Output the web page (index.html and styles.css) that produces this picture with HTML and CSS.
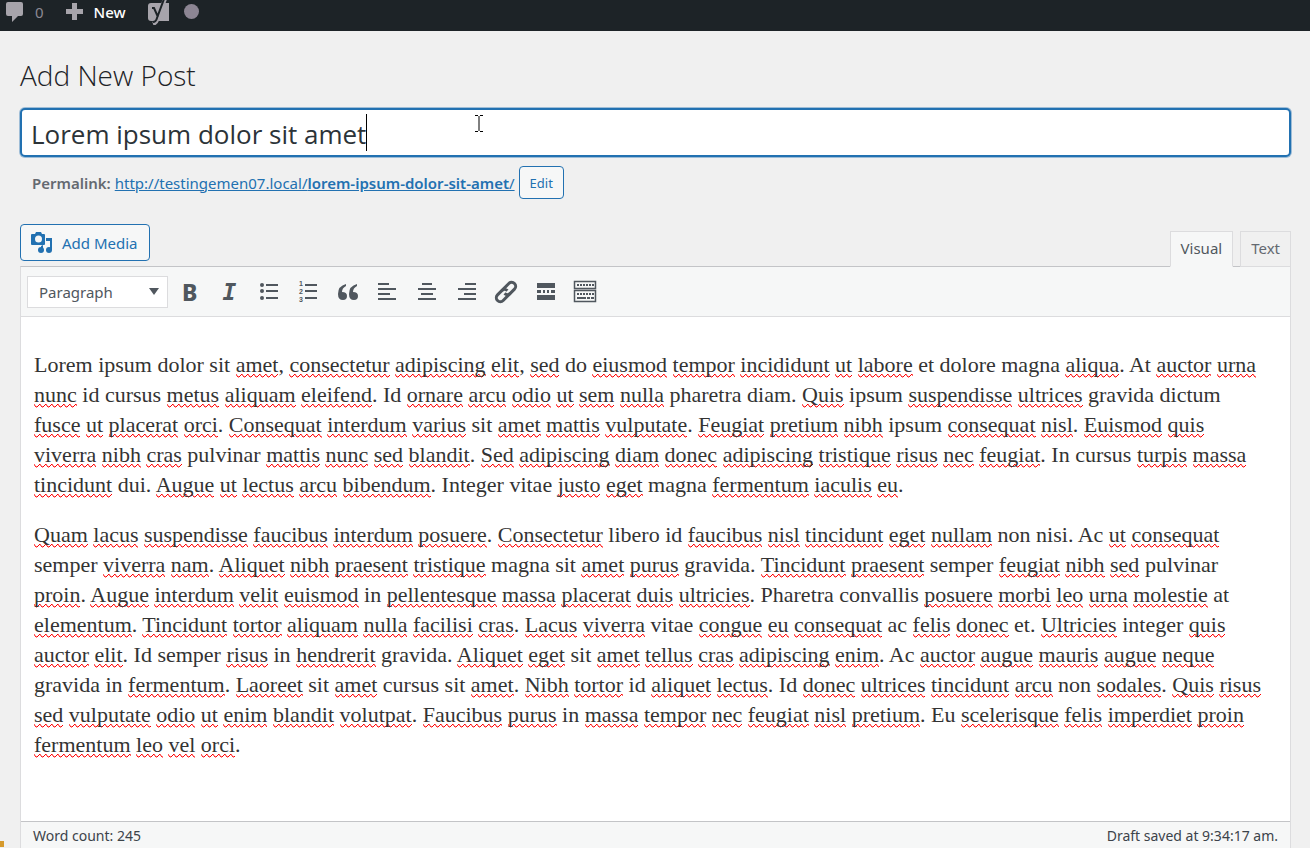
FILE: index.html
```
<!DOCTYPE html>
<html lang="en">
<head>
  <meta charset="utf-8">
  <title>Add New Post</title>
  <link rel="stylesheet" href="styles.css">
</head>
<body>
  <nav class="adminbar">
    <a href="#" class="bar-item">
      <svg width="18" height="22" viewBox="0 0 18 22"><path d="M2 1h13a2 2 0 0 1 2 2v10a2 2 0 0 1-2 2h-3l-6 6v-6H2a2 2 0 0 1-2-2V3a2 2 0 0 1 2-2z"/></svg>
      <span class="count">0</span>
    </a>
    <a href="#" class="bar-item bar-new">
      <svg width="17" height="22" viewBox="0 0 17 22"><path d="M6 2h5v6h6v5h-6v6H6v-6H0V8h6z"/></svg>
      <span>New</span>
    </a>
    <a href="#" class="bar-seo" aria-label="SEO">
      <svg width="22" height="26" viewBox="0 0 22 26">
        <path d="M3 4h18v18H3a3 3 0 0 1-3-3V7a3 3 0 0 1 3-3z"/>
        <path d="M17 0l-8 21q-1 3-4 4" fill="none" stroke="#a7a4ab" stroke-width="4"/>
        <path d="M16 0L9 19q-1 4-4 4M4 9h2l4 9" fill="none" stroke="#1d2327" stroke-width="2"/>
      </svg>
      <span class="score"></span>
    </a>
  </nav>

  <main class="wrap">
    <h1>Add New Post</h1>

    <div class="title-wrap">
      <input type="text" class="title" aria-label="Title" value="Lorem ipsum dolor sit amet">
      <span class="caret"></span>
      <svg class="pointer" width="8" height="17" viewBox="0 0 8 17"><path d="M0 .5h3M5 .5h3M0 16.5h3M5 16.5h3M4 1v15" fill="none" stroke="#000"/></svg>
    </div>

    <div class="permalink">
      <strong>Permalink:</strong>
      <a href="#">http://testingemen07.local/<b>lorem-ipsum-dolor-sit-amet</b>/</a>
      <button class="btn btn-small">Edit</button>
    </div>

    <div class="editor-tools">
      <button class="btn btn-media">
        <svg width="22" height="22" viewBox="0 0 22 22">
          <path fill-rule="evenodd" d="M1 2h3l1-2h5l1 2h2q1 0 1 1v9q0 1-1 1H1q-1 0-1-1V3q0-1 1-1zM7.500 3.500a3.500 3.500 0 1 0 0 7a3.500 3.500 0 1 0 0-7z"/>
          <path d="M15 6h6v12h-2V9h-4z"/>
          <path d="M12 13v5h-2v-4z"/>
          <circle cx="10" cy="18" r="3"/>
          <circle cx="18" cy="18" r="3"/>
        </svg>
        Add Media
      </button>
      <div class="tabs">
        <button class="tab active">Visual</button>
        <button class="tab">Text</button>
      </div>
    </div>

    <div class="editor">
      <div class="toolbar">
        <select class="format" aria-label="Format">
          <option>Paragraph</option>
        </select>
        <div class="tools">
          <button class="tool bold" aria-label="Bold">B</button>
          <button class="tool italic" aria-label="Italic">I</button>
          <button class="tool" aria-label="Bulleted list">
            <svg viewBox="0 0 24 24"><circle cx="5" cy="5" r="2"/><circle cx="5" cy="11" r="2"/><circle cx="5" cy="18" r="2"/><path d="M9 4h12v2H9zM9 10h12v2H9zM9 17h12v2H9z"/></svg>
          </button>
          <button class="tool" aria-label="Numbered list">
            <svg viewBox="0 0 24 24"><text x="3" y="6">1</text><text x="3" y="14">2</text><text x="3" y="22">3</text><path d="M9 4h12v2H9zM9 10h12v2H9zM9 17h12v2H9z"/></svg>
          </button>
          <button class="tool" aria-label="Blockquote">
            <svg viewBox="0 0 24 24"><path d="M10 4Q2 6 2 14q0 6 5 6 4 0 4-4t-5-4q0-4 4-6z"/><path d="M21 4q-8 2-8 10 0 6 5 6 4 0 4-4t-5-4q0-4 4-6z"/></svg>
          </button>
          <button class="tool" aria-label="Align left">
            <svg viewBox="0 0 24 24"><path d="M3 3h11v2H3zM3 8h18v2H3zM3 13h12v2H3zM3 18h18v2H3z"/></svg>
          </button>
          <button class="tool" aria-label="Align center">
            <svg viewBox="0 0 24 24"><path d="M7 3h10v2H7zM3 8h18v2H3zM6 13h12v2H6zM3 18h18v2H3z"/></svg>
          </button>
          <button class="tool" aria-label="Align right">
            <svg viewBox="0 0 24 24"><path d="M10 3h11v2H10zM3 8h18v2H3zM9 13h12v2H9zM3 18h18v2H3z"/></svg>
          </button>
          <button class="tool" aria-label="Insert link">
            <svg viewBox="0 0 24 24"><g fill="none" stroke="currentColor" stroke-width="3" transform="rotate(-45 12 12)"><path d="M14 16H4a4 4 0 0 1 0-8h6a4 4 0 0 1 4 4"/><path d="M10 8h10a4 4 0 0 1 0 8h-6a4 4 0 0 1-4-4"/></g></svg>
          </button>
          <button class="tool" aria-label="Read more">
            <svg viewBox="0 0 24 24"><path d="M3 3h18v5H3zM3 15h18v5H3zM3 10h4v3H3zM9 10h2v3H9zM13 10h2v3h-2zM17 10h4v3h-4z"/></svg>
          </button>
          <button class="tool" aria-label="Toggle toolbar">
            <svg viewBox="0 0 24 24"><path d="M1.500 1.500h21v7h-21zM1.500 10.500h21v11h-21z" fill="none" stroke="currentColor" stroke-width="1.500"/><path d="M4 5h17M4 14h17" fill="none" stroke="currentColor" stroke-width="2" stroke-dasharray="2 1"/><path d="M4 17h9v2H4zM14 17h3v2h-3zM18 17h3v2h-3z"/></svg>
          </button>
        </div>
      </div>

      <div class="post-body" contenteditable="true" spellcheck="false" role="textbox" aria-label="Post content">
        <p>
          Lorem ipsum dolor sit <u>amet</u>, <u>consectetur</u> <u>adipiscing</u> <u>elit</u>, <u>sed</u> do <u>eiusmod</u> <u>tempor</u> <u>incididunt</u> <u>ut</u> <u>labore</u> et dolore magna <u>aliqua</u>. At <u>auctor</u> <u>urna</u><br>
          <u>nunc</u> id cursus <u>metus</u> <u>aliquam</u> <u>eleifend</u>. Id <u>ornare</u> <u>arcu</u> <u>odio</u> <u>ut</u> <u>sem</u> <u>nulla</u> pharetra diam. <u>Quis</u> ipsum <u>suspendisse</u> <u>ultrices</u> gravida dictum<br>
          <u>fusce</u> <u>ut</u> <u>placerat</u> <u>orci</u>. <u>Consequat</u> <u>interdum</u> <u>varius</u> sit <u>amet</u> <u>mattis</u> <u>vulputate</u>. <u>Feugiat</u> <u>pretium</u> <u>nibh</u> ipsum <u>consequat</u> <u>nisl</u>. <u>Euismod</u> <u>quis</u><br>
          <u>viverra</u> <u>nibh</u> <u>cras</u> pulvinar <u>mattis</u> <u>nunc</u> <u>sed</u> <u>blandit</u>. <u>Sed</u> <u>adipiscing</u> <u>diam</u> <u>donec</u> <u>adipiscing</u> <u>tristique</u> <u>risus</u> <u>nec</u> <u>feugiat</u>. In cursus <u>turpis</u> <u>massa</u><br>
          <u>tincidunt</u> dui. <u>Augue</u> <u>ut</u> <u>lectus</u> <u>arcu</u> <u>bibendum</u>. Integer vitae <u>justo</u> <u>eget</u> magna <u>fermentum</u> <u>iaculis</u> <u>eu</u>.
        </p>
        <p>
          <u>Quam</u> <u>lacus</u> <u>suspendisse</u> <u>faucibus</u> <u>interdum</u> <u>posuere</u>. <u>Consectetur</u> libero id <u>faucibus</u> <u>nisl</u> <u>tincidunt</u> <u>eget</u> <u>nullam</u> non nisi. Ac <u>ut</u> <u>consequat</u><br>
          semper <u>viverra</u> <u>nam</u>. <u>Aliquet</u> <u>nibh</u> <u>praesent</u> <u>tristique</u> magna sit <u>amet</u> <u>purus</u> gravida. <u>Tincidunt</u> <u>praesent</u> semper <u>feugiat</u> <u>nibh</u> <u>sed</u> pulvinar<br>
          <u>proin</u>. <u>Augue</u> <u>interdum</u> <u>velit</u> <u>euismod</u> in <u>pellentesque</u> <u>massa</u> <u>placerat</u> <u>duis</u> <u>ultricies</u>. Pharetra convallis <u>posuere</u> <u>morbi</u> <u>leo</u> <u>urna</u> <u>molestie</u> at<br>
          <u>elementum</u>. <u>Tincidunt</u> <u>tortor</u> <u>aliquam</u> <u>nulla</u> <u>facilisi</u> <u>cras</u>. <u>Lacus</u> <u>viverra</u> vitae <u>congue</u> <u>eu</u> <u>consequat</u> ac <u>felis</u> <u>donec</u> et. <u>Ultricies</u> integer <u>quis</u><br>
          <u>auctor</u> <u>elit</u>. Id semper <u>risus</u> in <u>hendrerit</u> gravida. <u>Aliquet</u> <u>eget</u> sit <u>amet</u> <u>tellus</u> <u>cras</u> <u>adipiscing</u> <u>enim</u>. Ac <u>auctor</u> <u>augue</u> <u>mauris</u> <u>augue</u> <u>neque</u><br>
          gravida in <u>fermentum</u>. <u>Laoreet</u> sit <u>amet</u> cursus sit <u>amet</u>. <u>Nibh</u> <u>tortor</u> id <u>aliquet</u> <u>lectus</u>. Id <u>donec</u> <u>ultrices</u> <u>tincidunt</u> <u>arcu</u> non <u>sodales</u>. <u>Quis</u> <u>risus</u><br>
          <u>sed</u> <u>vulputate</u> <u>odio</u> <u>ut</u> <u>enim</u> <u>blandit</u> <u>volutpat</u>. <u>Faucibus</u> <u>purus</u> in <u>massa</u> <u>tempor</u> <u>nec</u> <u>feugiat</u> <u>nisl</u> <u>pretium</u>. Eu <u>scelerisque</u> <u>felis</u> <u>imperdiet</u> <u>proin</u><br>
          <u>fermentum</u> <u>leo</u> <u>vel</u> <u>orci</u>.
        </p>
      </div>

      <div class="statusbar">
        <span>Word count: 245</span>
        <span>Draft saved at 9:34:17 am.</span>
      </div>
    </div>
  </main>
  <span class="menu-mark"></span>
</body>
</html>
```
FILE: styles.css
```
* {
  box-sizing: border-box;
}

body {
  margin: 0;
  height: 100vh;
  overflow: hidden;
  position: relative;
  display: flex;
  flex-direction: column;
  background: #f0f0f0;
  color: #3c434a;
  font-family: "Noto Sans", "Open Sans", sans-serif;
  font-size: 15px;
}

button,
input,
select {
  font-family: inherit;
  font-size: inherit;
}

.adminbar {
  flex: none;
  display: flex;
  align-items: center;
  gap: 22px;
  height: 31px;
  padding: 0 6px 8px;
  background: #1d2327;
}

.bar-item {
  display: flex;
  align-items: center;
  gap: 11px;
  color: #fff;
  text-decoration: none;
}

.bar-item svg,
.bar-seo svg {
  fill: #a7a4ab;
}

.bar-item .count {
  color: #8c8994;
}

.bar-new {
  font-weight: 500;
}

.bar-seo {
  display: flex;
  align-items: center;
  gap: 14px;
}

.score {
  width: 15px;
  height: 15px;
  border-radius: 50%;
  background: #8c8593;
}

.wrap {
  flex: 1;
  display: flex;
  flex-direction: column;
  padding: 24px 19px 0 20px;
}

h1 {
  margin: 0 0 13px;
  color: #1d2327;
  font-family: "Open Sans", sans-serif;
  font-size: 28px;
  font-weight: 300;
  line-height: 40px;
}

.title-wrap {
  position: relative;
}

.title {
  display: block;
  width: 100%;
  height: 49px;
  padding: 2px 9px 0;
  border: 2px solid #2271b1;
  border-radius: 5px;
  background: #fff;
  box-shadow: 0 0 0 1px rgba(34, 113, 177, 0.4);
  color: #2c3338;
  font-family: "Open Sans", sans-serif;
  font-size: 26px;
  outline: none;
}

.caret {
  position: absolute;
  left: 346px;
  top: 6px;
  width: 1px;
  height: 37px;
  background: #000;
}

.pointer {
  position: absolute;
  left: 455px;
  top: 7px;
}

.permalink {
  display: flex;
  align-items: center;
  gap: 4px;
  margin-top: 9px;
  padding-left: 12px;
  color: #646970;
}

.permalink strong,
.permalink b {
  font-weight: 600;
}

.permalink a {
  color: #2271b1;
}

.btn {
  border: 1px solid #2271b1;
  border-radius: 4px;
  background: #f6f7f7;
  color: #2271b1;
}

.btn-small {
  height: 33px;
  padding: 0 10px;
  font-size: 13px;
}

.btn-media {
  display: flex;
  align-items: center;
  gap: 9px;
  height: 37px;
  padding: 0 11px 0 10px;
}

.btn-media svg {
  fill: #2271b1;
}

.editor-tools {
  display: flex;
  justify-content: space-between;
  align-items: flex-start;
  margin-top: 25px;
}

.tabs {
  position: relative;
  z-index: 1;
  display: flex;
  gap: 7px;
  margin-top: 7px;
}

.tab {
  height: 36px;
  padding: 0 10px 2px;
  border: 1px solid #dcdcde;
  background: #f0f0f0;
  color: #646970;
}

.tab.active {
  border-bottom-color: #f6f7f7;
  background: #f6f7f7;
  color: #50575e;
}

.editor {
  flex: 1;
  display: flex;
  flex-direction: column;
  margin-top: -1px;
  border: 1px solid #dcdcde;
  border-top-color: #c3c4c7;
  border-bottom: 0;
  background: #fff;
}

.toolbar {
  display: flex;
  align-items: center;
  gap: 2px;
  height: 50px;
  padding: 0 6px;
  border-bottom: 1px solid #dcdcde;
  background: #f6f7f7;
}

.format {
  width: 141px;
  height: 32px;
  padding: 0 11px;
  border: 1px solid #dcdcde;
  border-radius: 0;
  appearance: none;
  background: #fff url("data:image/svg+xml,%3Csvg xmlns='http://www.w3.org/2000/svg' width='10' height='7'%3E%3Cpath d='M0 0h10L5 7z' fill='%2350575e'/%3E%3C/svg%3E") no-repeat right 8px center;
  color: #50575e;
}

.tools {
  display: grid;
  grid-template-columns: repeat(11, 1fr);
  width: 435px;
}

.tool {
  display: flex;
  align-items: center;
  justify-content: center;
  height: 36px;
  padding: 0;
  border: 0;
  background: none;
  color: #50575e;
}

.tool svg {
  width: 24px;
  height: 24px;
  fill: currentColor;
}

.tool text {
  font-family: "Liberation Sans", sans-serif;
  font-size: 7px;
  font-weight: 700;
}

.bold {
  font-size: 23px;
  font-weight: 800;
}

.italic {
  font-family: "DejaVu Sans Mono", monospace;
  font-size: 23px;
  font-weight: 700;
  font-style: italic;
}

.post-body {
  flex: 1;
  padding: 33px 13px 0;
  color: #333;
  font-family: Georgia, "Liberation Serif", serif;
  font-size: 22px;
  line-height: 30px;
  white-space: nowrap;
  outline: none;
}

.post-body p {
  margin: 0 0 20px;
}

/* misspelled words */
.post-body u {
  padding-bottom: 1px;
  background: url("data:image/svg+xml,%3Csvg xmlns='http://www.w3.org/2000/svg' width='6' height='5'%3E%3Cpath d='M-1 0L2 4h1L6 1h1' fill='none' stroke='red'/%3E%3C/svg%3E") repeat-x left bottom;
  text-decoration: none;
}

.statusbar {
  display: flex;
  justify-content: space-between;
  height: 27px;
  padding: 0 12px;
  border-top: 1px solid #c3c4c7;
  background: #f6f7f7;
  font-size: 14px;
  line-height: 28px;
}

/* edge of the collapsed admin menu */
.menu-mark {
  position: absolute;
  left: 0;
  bottom: 1px;
  width: 4px;
  height: 6px;
  background: #d69a2d;
}
```
